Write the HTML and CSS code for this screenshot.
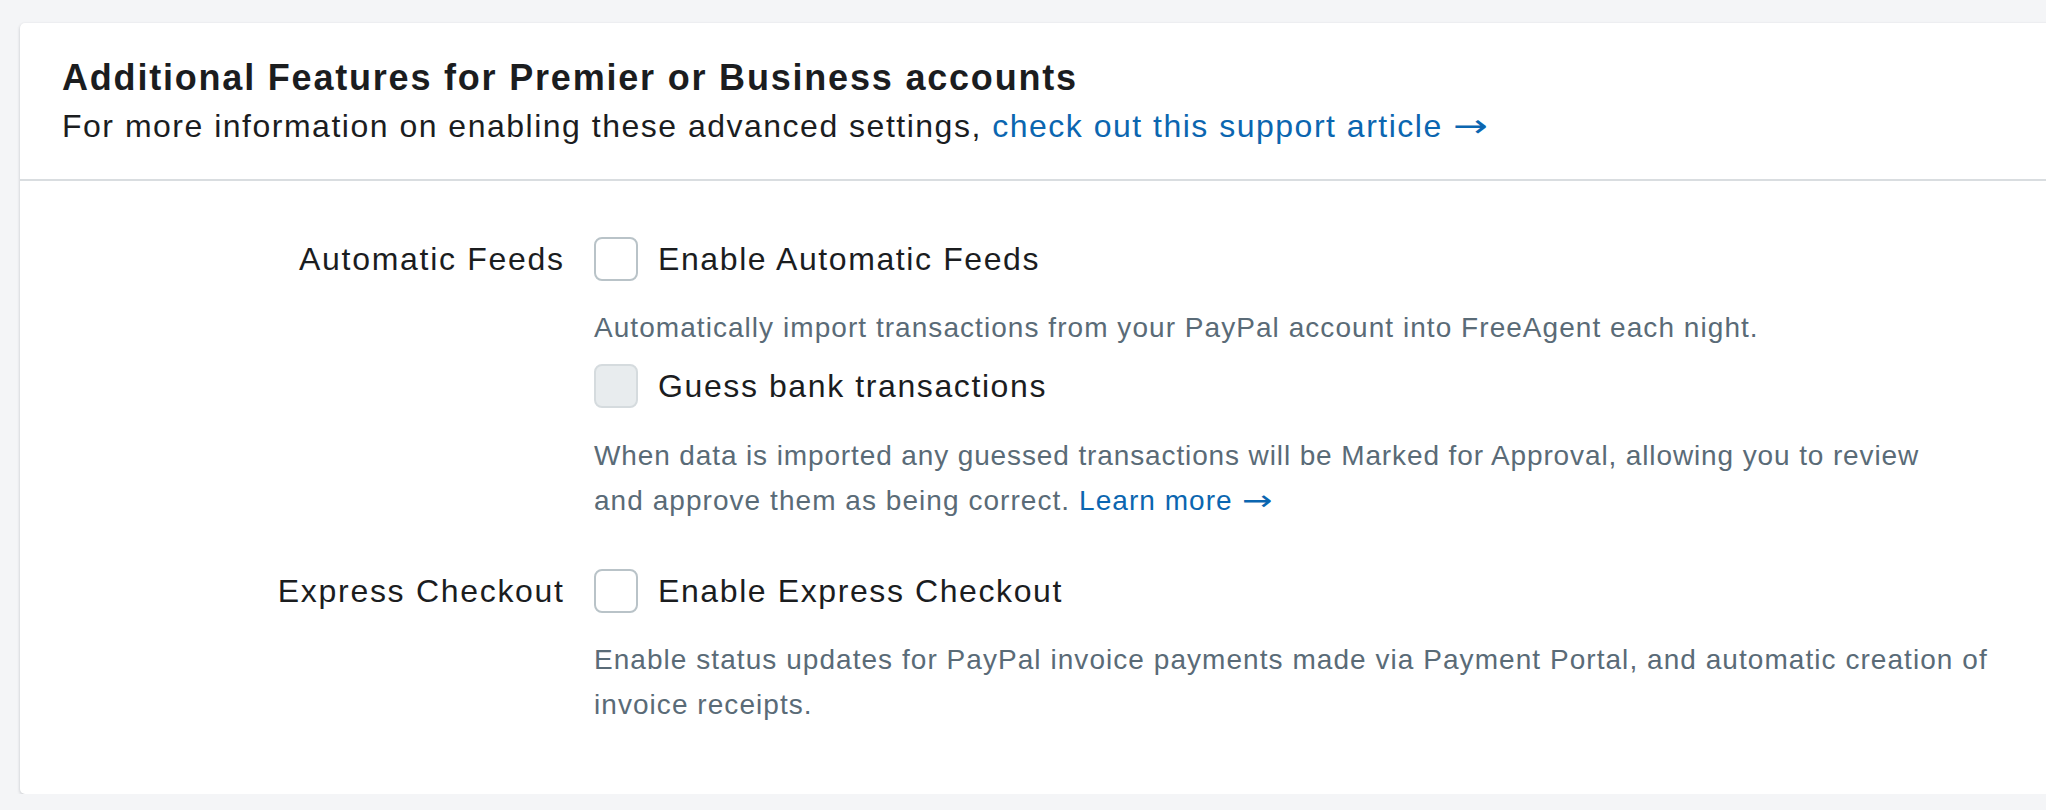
FILE: index.html
```html
<!DOCTYPE html>
<html lang="en">
<head>
<meta charset="utf-8">
<title>Additional Features</title>
<link rel="stylesheet" href="styles.css">
</head>
<body>
<section class="card">
  <header class="card-header">
    <h2 class="card-title">Additional Features for Premier or Business accounts</h2>
    <p class="card-subtitle">For more information on enabling these advanced settings, <a href="#" class="link">check out this support article <span class="arrow">→</span></a></p>
  </header>
  <div class="card-body">
    <div class="field">
      <div class="field-label">Automatic Feeds</div>
      <div class="field-controls">
        <label class="check-row"><span class="checkbox"></span><span class="check-text">Enable Automatic Feeds</span></label>
        <p class="hint">Automatically import transactions from your PayPal account into FreeAgent each night.</p>
        <label class="check-row check-row-sub"><span class="checkbox checkbox-disabled"></span><span class="check-text">Guess bank transactions</span></label>
        <p class="hint hint-sub"><span class="tight">When data is imported any guessed transactions will be Marked for Approval, allowing you to review</span><br>and approve them as being correct. <a href="#" class="link">Learn more <span class="arrow">→</span></a></p>
      </div>
    </div>
    <div class="field field-next">
      <div class="field-label">Express Checkout</div>
      <div class="field-controls">
        <label class="check-row"><span class="checkbox"></span><span class="check-text">Enable Express Checkout</span></label>
        <p class="hint">Enable status updates for PayPal invoice payments made via Payment Portal, and automatic creation of<br>invoice receipts.</p>
      </div>
    </div>
  </div>
</section>
</body>
</html>
```

FILE: styles.css
```css
html, body {
  margin: 0;
  padding: 0;
  background: #f4f5f7;
  overflow: hidden;
}
body {
  font-family: "Liberation Sans", Arial, Helvetica, sans-serif;
  color: #1b1d1f;
  padding: 23px 0 0 20px;
}
.card {
  background: #ffffff;
  border-radius: 5px;
  box-shadow: 0 1px 3px rgba(30, 40, 50, 0.18), 0 2px 4px rgba(30, 40, 50, 0.06);
  margin-right: -40px;
  height: 771px;
  box-sizing: border-box;
}
.card-header {
  padding: 33px 42px 30px;
  border-bottom: 2px solid #d9dde0;
}
.card-title {
  margin: 0 0 3px;
  font-size: 36px;
  line-height: 44px;
  font-weight: 700;
  letter-spacing: 1.8px;
  color: #1b1d1f;
}
.card-subtitle {
  margin: 0;
  font-size: 32px;
  line-height: 46px;
  letter-spacing: 1.5px;
  color: #1b1d1f;
  white-space: nowrap;
}
.link {
  color: #0b66b0;
  text-decoration: none;
}
.arrow {
  display: inline-block;
  font-family: "DejaVu Sans", sans-serif;
  letter-spacing: 0;
  transform: scaleX(1.3);
  transform-origin: left center;
}
.card-body {
  padding: 56px 0 0;
}
.field {
  display: grid;
  grid-template-columns: 543px 1fr;
  column-gap: 31px;
  align-items: start;
}
.field-next {
  margin-top: 46px;
}
.field-label {
  text-align: right;
  font-size: 32px;
  line-height: 44px;
  letter-spacing: 1.7px;
  margin-right: -1.7px;
  white-space: nowrap;
}
.field-controls {
  display: flex;
  flex-direction: column;
  align-items: flex-start;
}
.check-row {
  display: flex;
  align-items: center;
  gap: 20px;
  height: 44px;
}
.check-row-sub {
  margin-top: 14px;
}
.checkbox {
  width: 44px;
  height: 44px;
  box-sizing: border-box;
  border: 2px solid #b9c3c8;
  border-radius: 8px;
  background: #ffffff;
  flex: none;
}
.checkbox-disabled {
  background: #e8ecee;
  border-color: #d5dbde;
}
.check-text {
  font-size: 32px;
  line-height: 44px;
  letter-spacing: 1.6px;
  white-space: nowrap;
}
.hint {
  margin: 24px 0 0;
  font-size: 28px;
  line-height: 45px;
  letter-spacing: 1.05px;
  color: #5a6b77;
  white-space: nowrap;
}
.hint-sub {
  margin-top: 25px;
}
.tight {
  letter-spacing: 0.88px;
}
```
